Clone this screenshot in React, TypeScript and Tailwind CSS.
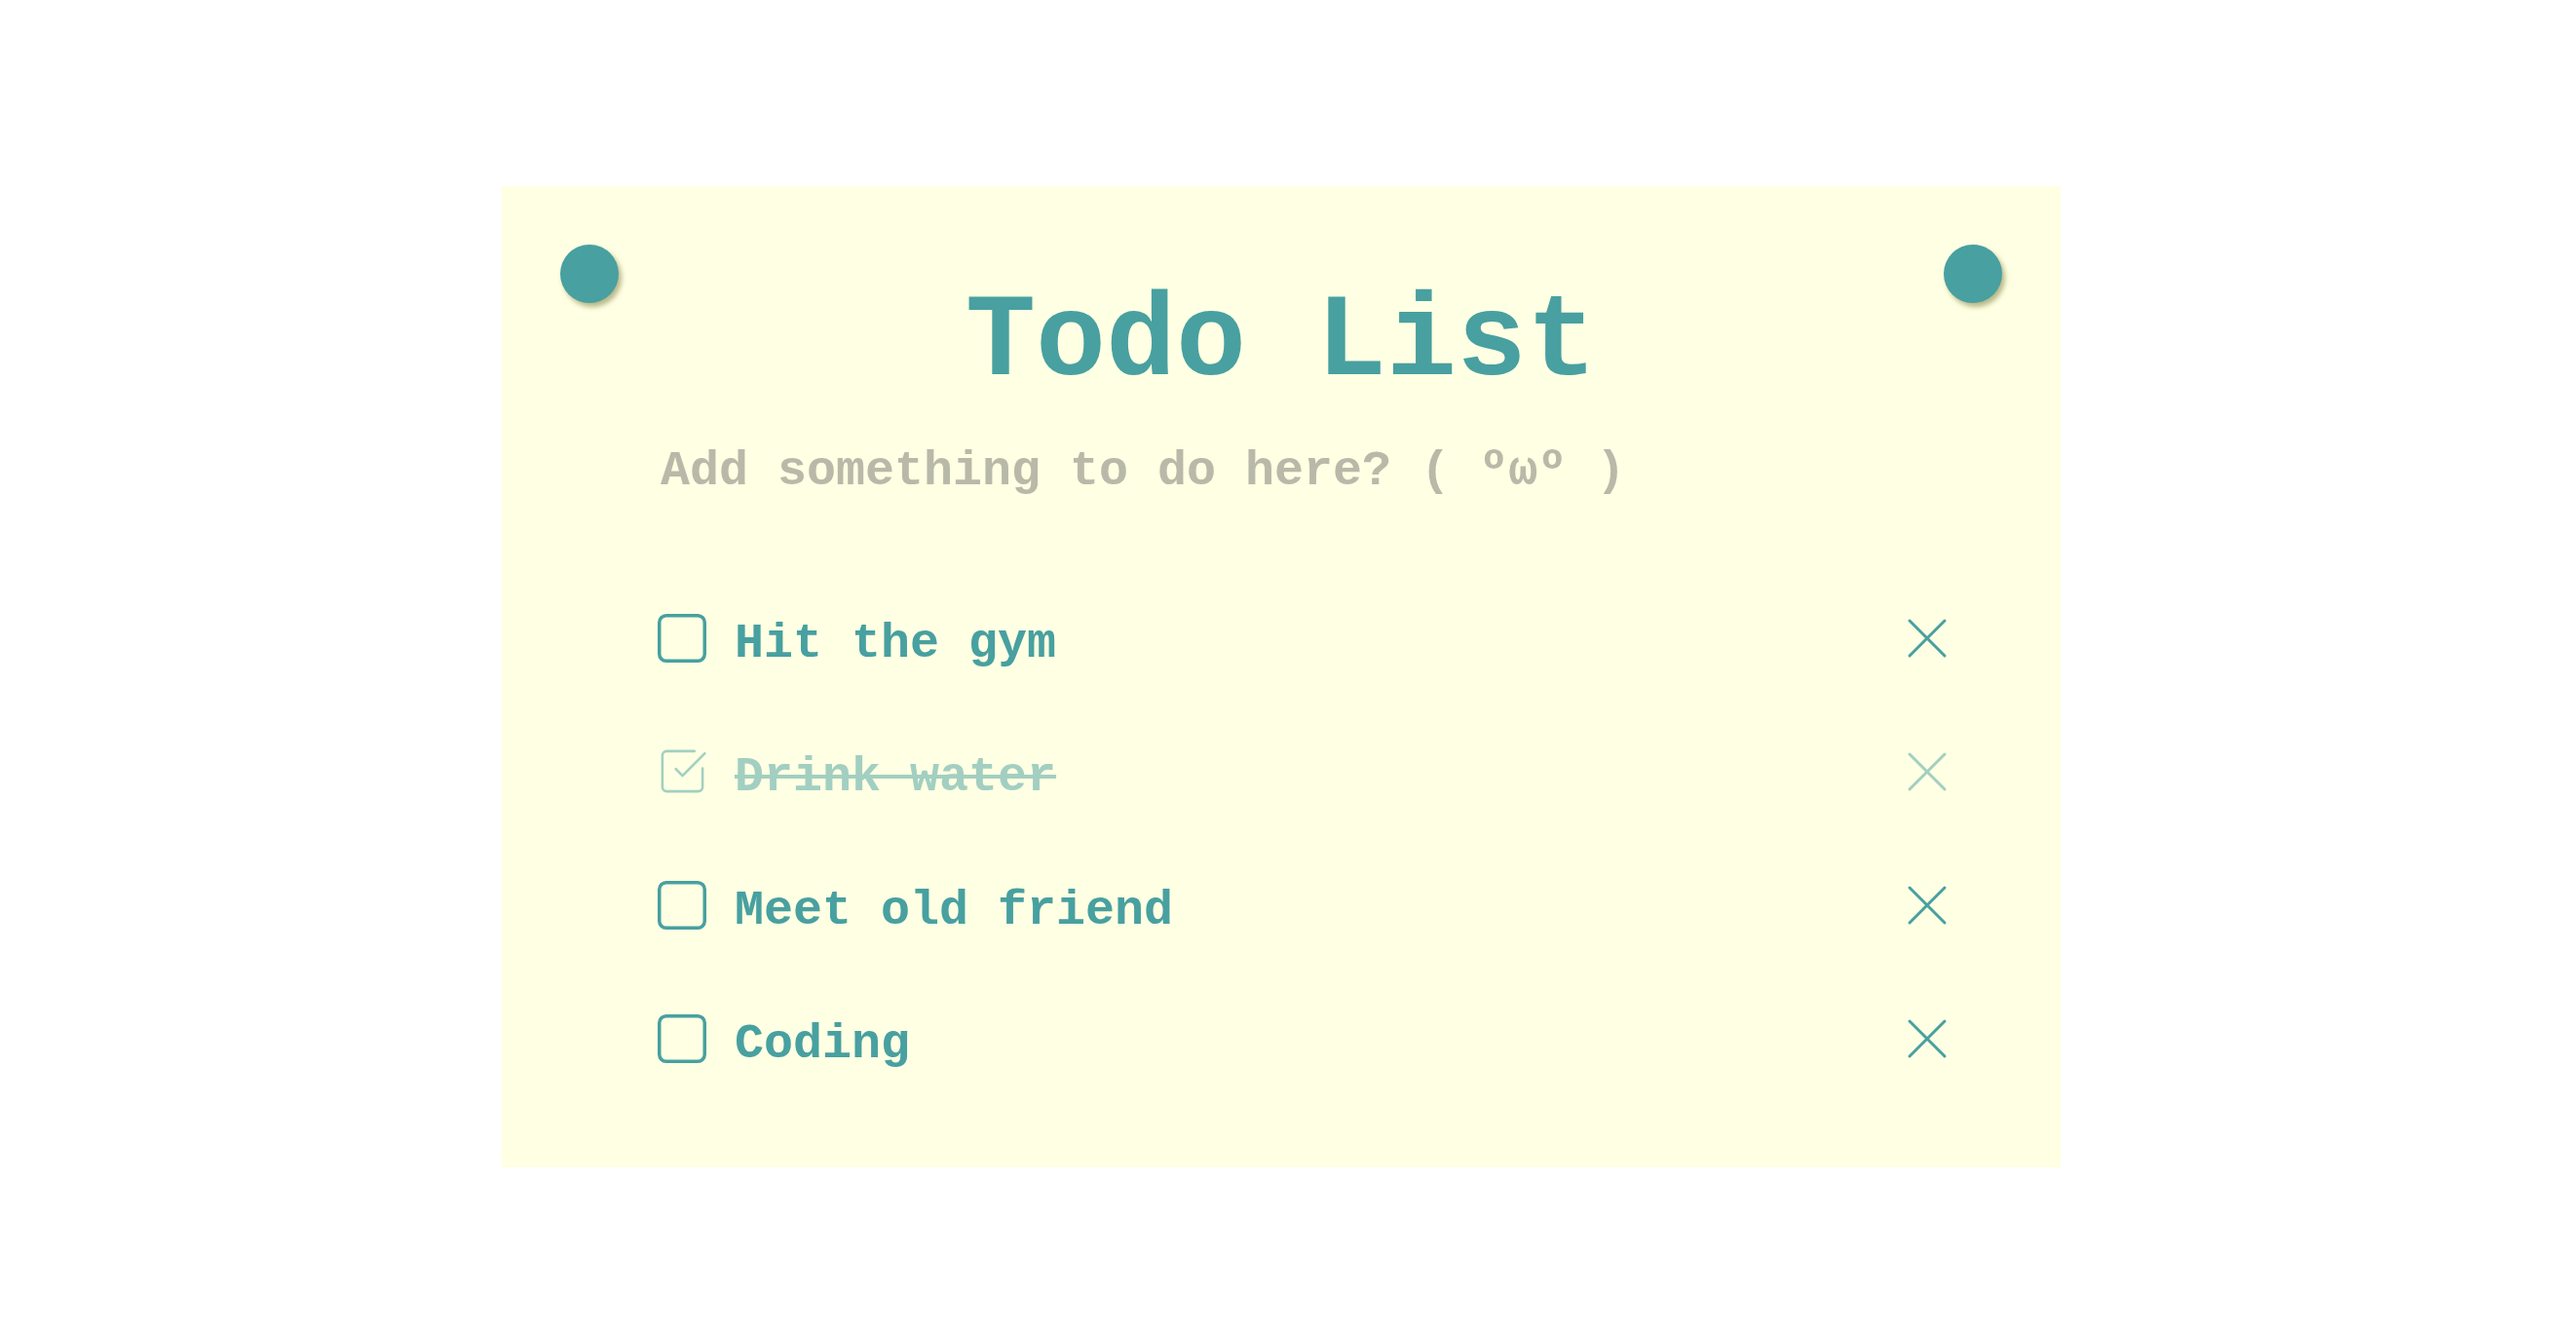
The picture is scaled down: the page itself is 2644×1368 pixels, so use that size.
import { useState } from 'react';
import { SquareCheckBig, X } from 'lucide-react';

type Todo = {
  id: number;
  text: string;
  done: boolean;
};

const initialTodos: Todo[] = [
  { id: 1, text: 'Hit the gym', done: false },
  { id: 2, text: 'Drink water', done: true },
  { id: 3, text: 'Meet old friend', done: false },
  { id: 4, text: 'Coding', done: false },
];

const EmptyBox = () => (
  <svg width="50" height="50" viewBox="0 0 50 50" fill="none">
    <rect x="1.75" y="1.75" width="46.5" height="46.5" rx="7" stroke="currentColor" strokeWidth="3.5" />
  </svg>
);

export default function App() {
  const [todos, setTodos] = useState<Todo[]>(initialTodos);
  const [draft, setDraft] = useState('');

  const toggle = (id: number) =>
    setTodos((list) => list.map((t) => (t.id === id ? { ...t, done: !t.done } : t)));

  const remove = (id: number) => setTodos((list) => list.filter((t) => t.id !== id));

  const add = () => {
    if (!draft.trim()) return;
    setTodos((list) => [...list, { id: Date.now(), text: draft.trim(), done: false }]);
    setDraft('');
  };

  return (
    <div className="min-h-screen bg-white flex justify-center pt-[191px] pr-[14px] font-['Liberation_Mono',monospace]">
      <div className="relative w-[1600px] h-[1007px] bg-[#ffffe3] flex flex-col">
        <span className="absolute left-[60px] top-[60px] w-[60px] h-[60px] rounded-full bg-[#48a0a0] shadow-[3px_4px_5px_rgba(160,160,110,0.75)]" />
        <span className="absolute right-[60px] top-[60px] w-[60px] h-[60px] rounded-full bg-[#48a0a0] shadow-[3px_4px_5px_rgba(160,160,110,0.75)]" />

        <h1 className="pt-[101px] text-center text-[120px] leading-none font-bold text-[#48a0a0]">Todo List</h1>

        <div className="mt-[46px] pl-[163px] pr-[118px]">
          <input
            value={draft}
            onChange={(e) => setDraft(e.target.value)}
            onKeyDown={(e) => e.key === 'Enter' && add()}
            placeholder="Add something to do here? ( ºωº )"
            className="w-full h-[50px] bg-transparent outline-none text-[50px] leading-none font-bold text-[#48a0a0] placeholder:text-[#b9b9a9]"
          />
        </div>

        <ul className="mt-[78px] pl-[160px] pr-[101px]">
          {todos.map((todo) => (
            <li
              key={todo.id}
              className={`h-[137px] flex items-center text-[#48a0a0] ${todo.done ? 'opacity-50' : ''}`}
            >
              <button
                onClick={() => toggle(todo.id)}
                className="w-[50px] h-[50px] shrink-0 flex items-center justify-center"
              >
                {todo.done ? <SquareCheckBig size={55} strokeWidth={1.1} className="shrink-0" /> : <EmptyBox />}
              </button>
              <span
                className={`flex-1 ml-[29px] pt-[13px] text-[50px] leading-none font-bold ${
                  todo.done ? 'line-through decoration-[4px]' : ''
                }`}
              >
                {todo.text}
              </span>
              <button onClick={() => remove(todo.id)} className="shrink-0">
                <X size={72} strokeWidth={1} />
              </button>
            </li>
          ))}
        </ul>
      </div>
    </div>
  );
}
